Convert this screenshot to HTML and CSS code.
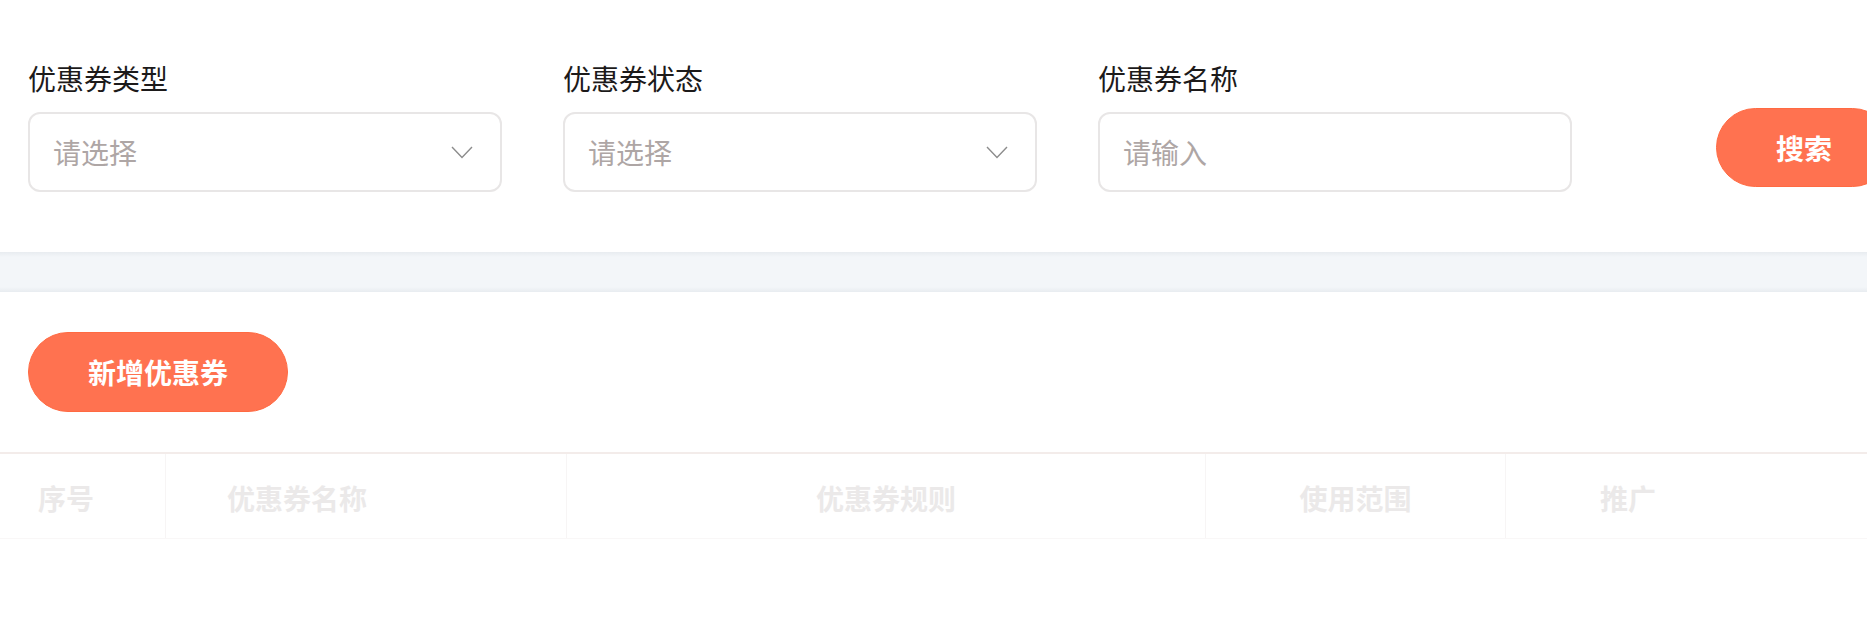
FILE: index.html
```html
<!DOCTYPE html>
<html lang="zh-CN">
<head>
<meta charset="utf-8">
<title>优惠券</title>
<link rel="stylesheet" href="styles.css">
</head>
<body>
<div class="page">
  <section class="filter">
    <div class="field">
      <div class="label">优惠券类型</div>
      <div class="control">
        <span class="placeholder">请选择</span>
        <svg class="chevron" width="22" height="13" viewBox="0 0 22 13"><path d="M1 1 L11 11.5 L21 1" fill="none" stroke="#8c8c8c" stroke-width="1.4"/></svg>
      </div>
    </div>
    <div class="field">
      <div class="label">优惠券状态</div>
      <div class="control">
        <span class="placeholder">请选择</span>
        <svg class="chevron" width="22" height="13" viewBox="0 0 22 13"><path d="M1 1 L11 11.5 L21 1" fill="none" stroke="#8c8c8c" stroke-width="1.4"/></svg>
      </div>
    </div>
    <div class="field">
      <div class="label">优惠券名称</div>
      <div class="control">
        <span class="placeholder">请输入</span>
      </div>
    </div>
    <button class="btn btn-search">搜索</button>
  </section>
  <div class="band"></div>
  <section class="list">
    <div class="toolbar">
      <button class="btn btn-add">新增优惠券</button>
    </div>
    <div class="table">
      <div class="thead">
        <div class="th c1">序号</div>
        <div class="th c2">优惠券名称</div>
        <div class="th c3">优惠券规则</div>
        <div class="th c4">使用范围</div>
        <div class="th c5">推广</div>
        <div class="th c6"></div>
      </div>
    </div>
  </section>
</div>
</body>
</html>
```

FILE: styles.css
```css
* { box-sizing: border-box; }
html, body {
  margin: 0;
  padding: 0;
  background: #ffffff;
  overflow: hidden;
}
body {
  font-family: "Noto Sans CJK SC", "Noto Sans", sans-serif;
  width: 1867px;
  height: 633px;
}
.page { width: 1867px; }

.filter {
  display: flex;
  align-items: flex-end;
  padding: 58px 0 60px 28px;
  gap: 61px;
}
.field {
  width: 474px;
  flex-shrink: 0;
}
.label {
  font-size: 28px;
  line-height: 40px;
  color: #1c1a1a;
  margin-bottom: 14px;
}
.control {
  height: 80px;
  border: 2px solid #e8e6e6;
  border-radius: 12px;
  display: flex;
  align-items: center;
  justify-content: space-between;
  padding: 0 27px 0 23px;
}
.placeholder {
  font-size: 28px;
  line-height: 40px;
  color: #aea6a5;
}
.chevron { display: block; }

.btn {
  font-family: "Noto Sans CJK SC", "Noto Sans", sans-serif;
  font-weight: 700;
  font-size: 28px;
  color: #ffffff;
  background: #ff7250;
  border: 1px solid #ff6a42;
  height: 80px;
  border-radius: 40px;
  padding: 0;
  flex-shrink: 0;
  cursor: pointer;
}
.btn-search {
  width: 176px;
  margin-left: 83px;
  margin-bottom: 5px;
  height: 79px;
}

.band {
  height: 40px;
  background: linear-gradient(to bottom, #e8ecf0 0, #f3f6f9 5px, #f3f6f9 35px, #e8ecf0 40px);
}

.list { padding-top: 40px; }
.toolbar { padding: 0 0 40px 28px; }
.btn-add { width: 260px; }

.table {
  border-top: 2px solid #f3ecea;
}
.thead {
  display: flex;
  border-bottom: 1px solid #f9f7f7;
}
.th {
  font-size: 28px;
  font-weight: 700;
  line-height: 40px;
  color: #ebe9e9;
  padding: 24px 0 20px;
  border-right: 1px solid #f7f5f5;
  flex-shrink: 0;
}
.c1 { width: 166px; padding-left: 38px; }
.c2 { width: 401px; padding-left: 61px; }
.c3 { width: 639px; text-align: center; }
.c4 { width: 300px; text-align: center; }
.c5 { width: 244px; text-align: center; border-right: none; }
.c6 { flex: 1; border-right: none; }
```
